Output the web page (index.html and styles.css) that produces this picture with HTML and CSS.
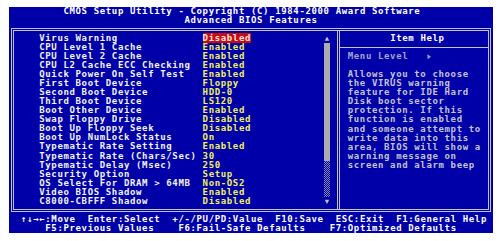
FILE: index.html
```html
<!DOCTYPE html>
<html lang="en">
<head>
    <meta charset="UTF-8">
    <meta name="viewport" content="width=device-width, initial-scale=1.0">
    <title>CMOS Setup Utility - Advanced BIOS Features</title>
    <link rel="stylesheet" href="styles.css">
</head>
<body>

    <div class="screen">
        <div class="title">
            <div class="title-main">CMOS Setup Utility - Copyright (C) 1984-2000 Award Software</div>
            <div class="title-sub">Advanced BIOS Features</div>
        </div>

        <div class="frame">
            <div class="settings">
                <ul class="items">
                    <li><span class="name">Virus Warning</span><span class="value"><span class="selected">Disabled</span></span></li>
                    <li><span class="name">CPU Level 1 Cache</span><span class="value">Enabled</span></li>
                    <li><span class="name">CPU Level 2 Cache</span><span class="value">Enabled</span></li>
                    <li><span class="name">CPU L2 Cache ECC Checking</span><span class="value">Enabled</span></li>
                    <li><span class="name">Quick Power On Self Test</span><span class="value">Enabled</span></li>
                    <li><span class="name">First Boot Device</span><span class="value">Floppy</span></li>
                    <li><span class="name">Second Boot Device</span><span class="value">HDD-0</span></li>
                    <li><span class="name">Third Boot Device</span><span class="value">LS120</span></li>
                    <li><span class="name">Boot Other Device</span><span class="value">Enabled</span></li>
                    <li><span class="name">Swap Floppy Drive</span><span class="value">Disabled</span></li>
                    <li><span class="name">Boot Up Floppy Seek</span><span class="value">Disabled</span></li>
                    <li><span class="name">Boot Up NumLock Status</span><span class="value">On</span></li>
                    <li><span class="name">Typematic Rate Setting</span><span class="value">Enabled</span></li>
                    <li><span class="name">Typematic Rate (Chars/Sec)</span><span class="value">30</span></li>
                    <li><span class="name">Typematic Delay (Msec)</span><span class="value">250</span></li>
                    <li><span class="name">Security Option</span><span class="value">Setup</span></li>
                    <li><span class="name">OS Select For DRAM &gt; 64MB</span><span class="value">Non-OS2</span></li>
                    <li><span class="name">Video BIOS Shadow</span><span class="value">Enabled</span></li>
                    <li><span class="name">C8000-CBFFF Shadow</span><span class="value">Disabled</span></li>
                </ul>

                <!-- scroll bar on the right of the list -->
                <div class="scrollbar">
                    <div class="arrow"><svg width="6" height="9" viewBox="0 0 6 9"><path d="M3 2.5 L5.2 6.8 L0.8 6.8 Z" fill="#c4c4cc"/></svg></div>
                    <div class="thumb"></div>
                    <div class="track"></div>
                    <div class="arrow"><svg width="6" height="9" viewBox="0 0 6 9"><path d="M3 7 L5.2 2.7 L0.8 2.7 Z" fill="#c4c4cc"/></svg></div>
                </div>
            </div>

            <div class="help">
                <div class="help-title">Item Help</div>
                <div class="help-body">
                    <div class="menu-level">Menu Level<span class="level-arrow"><svg width="6" height="9" viewBox="0 0 6 9"><path d="M1.5 2.3 L5 4.8 L1.5 7.3 Z" fill="#a4a4d0"/></svg></span></div>
                    <p class="help-text">Allows you to choose<br>the VIRUS warning<br>feature for IDE Hard<br>Disk boot sector<br>protection. If this<br>function is enabled<br>and someone attempt to<br>write data into this<br>area, BIOS will show a<br>warning message on<br>screen and alarm beep</p>
                </div>
            </div>
        </div>

        <div class="keys">
            <div class="keys-row keys-first">
                <span>↑↓→←:Move</span>
                <span>Enter:Select</span>
                <span>+/-/PU/PD:Value</span>
                <span>F10:Save</span>
                <span>ESC:Exit</span>
                <span>F1:General Help</span>
            </div>
            <div class="keys-row keys-second">
                <span>F5:Previous Values</span>
                <span>F6:Fail-Safe Defaults</span>
                <span>F7:Optimized Defaults</span>
            </div>
        </div>
    </div>

</body>
</html>
```

FILE: styles.css
```css
/* text mode screen: 80 x 25 cells */
:root {
    --cw: 6.05px;
    --lh: 9.04px;
    --blue: #0000a8;
    --line: #c4c4cc;
}
body {
    margin: 0;
    background: #ffffff;
}
.screen {
    margin: 7px 0 0 9px;
    width: calc(80 * var(--cw));
    height: calc(25 * var(--lh));
    background: var(--blue);
    color: #f4f4f4;
    font-family: "DejaVu Sans Mono", "Liberation Mono", monospace;
    font-weight: bold;
    font-size: 9px;
    letter-spacing: 0.632px;
    line-height: var(--lh);
    white-space: nowrap;
    overflow: hidden;
}
.title {
    height: calc(2 * var(--lh));
    color: #ffffff;
}
.title-main {
    padding-left: calc(9 * var(--cw));
}
.title-sub {
    padding-left: calc(29 * var(--cw));
}
.frame {
    display: flex;
    height: calc(20 * var(--lh) + 3px);
    margin: calc(var(--lh) / 2 - 1.5px) calc(var(--cw) / 2 - 1.5px);
    border: 3px double var(--line);
    box-sizing: border-box;
}
.settings {
    display: flex;
    width: calc(54 * var(--cw));
    padding-top: calc(var(--lh) / 2 - 1.5px);
    border-right: 3px double var(--line);
    box-sizing: border-box;
}
.items {
    list-style: none;
    margin: 0;
    padding: 0 0 0 calc(4.5 * var(--cw) - 1.5px);
}
.items li {
    display: grid;
    grid-template-columns: calc(27 * var(--cw)) calc(20 * var(--cw));
    height: var(--lh);
}
.name {
    color: #f4f4f4;
}
.value {
    color: #f2f05a;
}
.selected {
    background: #c80c0c;
    color: #ffe4e4;
}
.scrollbar {
    display: flex;
    flex-direction: column;
    width: var(--cw);
    height: calc(19 * var(--lh));
}
.arrow {
    height: var(--lh);
}
.arrow svg {
    display: block;
}
.thumb {
    height: calc(13 * var(--lh));
    background: #acacb0;
}
.track {
    flex: 1;
    background-color: #3c3c9c;
    background-image: repeating-conic-gradient(#8a8aa8 0 25%, var(--blue) 0 50%);
    background-size: 2px 2px;
}
.help {
    flex: 1;
}
.help-title {
    padding: calc(var(--lh) / 2 - 1.5px) 0 calc(var(--lh) / 2 - 0.5px) calc(8.5 * var(--cw) - 1.5px);
    border-bottom: 1px solid var(--line);
    color: #ffffff;
}
.help-body {
    padding: calc(var(--lh) / 2 - 0.5px) 0 0 calc(1.5 * var(--cw) - 1.5px);
}
.menu-level {
    display: flex;
    height: var(--lh);
    color: #a4a4d0;
}
.level-arrow {
    width: var(--cw);
    margin-left: calc(3 * var(--cw));
}
.level-arrow svg {
    display: block;
}
.help-text {
    margin: var(--lh) 0 0;
    color: #c4c4d4;
}
.keys {
    color: #ffffff;
}
.keys-row {
    display: flex;
    height: var(--lh);
}
.keys-first {
    gap: calc(2 * var(--cw));
    padding-left: calc(2 * var(--cw));
}
.keys-second {
    gap: calc(4 * var(--cw));
    padding-left: calc(6 * var(--cw));
}
```
